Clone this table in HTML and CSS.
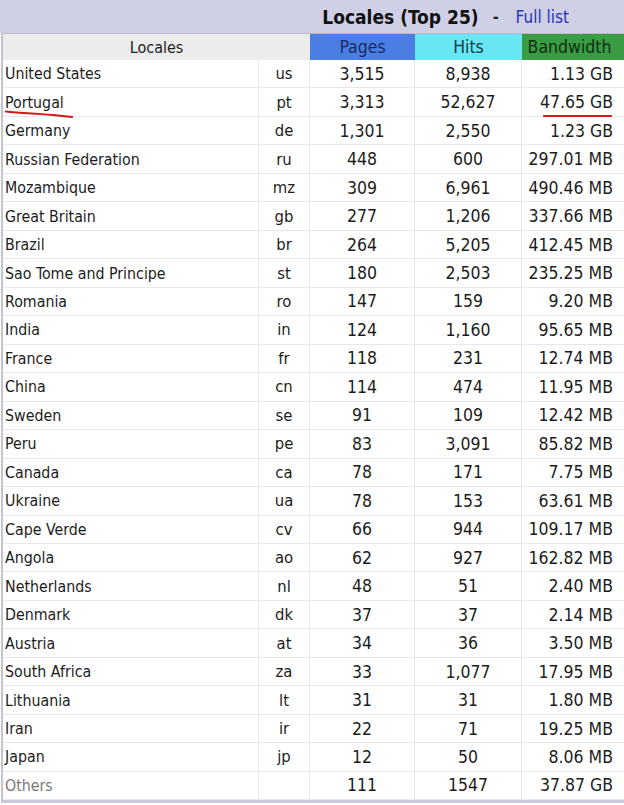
FILE: index.html
```html
<!DOCTYPE html>
<html>
<head>
<meta charset="utf-8">
<link rel="stylesheet" href="styles.css">
</head>
<body>
<div class="page">
  <div class="titlebar">
    <span class="title">Locales (Top 25)</span>
    <span class="dash">-</span>
    <a class="full">Full list</a>
  </div>
  <div class="table">
    <div class="hd hd-loc">Locales</div>
    <div class="hd hd-pages">Pages</div>
    <div class="hd hd-hits">Hits</div>
    <div class="hd hd-bw">Bandwidth</div>

    <div class="c name">United States</div><div class="c code">us</div><div class="c num">3,515</div><div class="c num">8,938</div><div class="c bw">1.13 GB</div>
    <div class="c name mark-wrap">Portugal<svg class="mark mark-left" width="72" height="10" viewBox="0 0 72 10"><path d="M1 2.5 C 20 4.5, 45 5, 67 8" stroke="#d41818" stroke-width="2.2" fill="none" stroke-linecap="round"/></svg></div><div class="c code">pt</div><div class="c num">3,313</div><div class="c num">52,627</div><div class="c bw mark-wrap">47.65 GB<svg class="mark mark-right" width="70" height="6" viewBox="0 0 70 6"><path d="M1 3 L 68 3" stroke="#d41818" stroke-width="2.2" fill="none" stroke-linecap="round"/></svg></div>
    <div class="c name">Germany</div><div class="c code">de</div><div class="c num">1,301</div><div class="c num">2,550</div><div class="c bw">1.23 GB</div>
    <div class="c name">Russian Federation</div><div class="c code">ru</div><div class="c num">448</div><div class="c num">600</div><div class="c bw">297.01 MB</div>
    <div class="c name">Mozambique</div><div class="c code">mz</div><div class="c num">309</div><div class="c num">6,961</div><div class="c bw">490.46 MB</div>
    <div class="c name">Great Britain</div><div class="c code">gb</div><div class="c num">277</div><div class="c num">1,206</div><div class="c bw">337.66 MB</div>
    <div class="c name">Brazil</div><div class="c code">br</div><div class="c num">264</div><div class="c num">5,205</div><div class="c bw">412.45 MB</div>
    <div class="c name">Sao Tome and Principe</div><div class="c code">st</div><div class="c num">180</div><div class="c num">2,503</div><div class="c bw">235.25 MB</div>
    <div class="c name">Romania</div><div class="c code">ro</div><div class="c num">147</div><div class="c num">159</div><div class="c bw">9.20 MB</div>
    <div class="c name">India</div><div class="c code">in</div><div class="c num">124</div><div class="c num">1,160</div><div class="c bw">95.65 MB</div>
    <div class="c name">France</div><div class="c code">fr</div><div class="c num">118</div><div class="c num">231</div><div class="c bw">12.74 MB</div>
    <div class="c name">China</div><div class="c code">cn</div><div class="c num">114</div><div class="c num">474</div><div class="c bw">11.95 MB</div>
    <div class="c name">Sweden</div><div class="c code">se</div><div class="c num">91</div><div class="c num">109</div><div class="c bw">12.42 MB</div>
    <div class="c name">Peru</div><div class="c code">pe</div><div class="c num">83</div><div class="c num">3,091</div><div class="c bw">85.82 MB</div>
    <div class="c name">Canada</div><div class="c code">ca</div><div class="c num">78</div><div class="c num">171</div><div class="c bw">7.75 MB</div>
    <div class="c name">Ukraine</div><div class="c code">ua</div><div class="c num">78</div><div class="c num">153</div><div class="c bw">63.61 MB</div>
    <div class="c name">Cape Verde</div><div class="c code">cv</div><div class="c num">66</div><div class="c num">944</div><div class="c bw">109.17 MB</div>
    <div class="c name">Angola</div><div class="c code">ao</div><div class="c num">62</div><div class="c num">927</div><div class="c bw">162.82 MB</div>
    <div class="c name">Netherlands</div><div class="c code">nl</div><div class="c num">48</div><div class="c num">51</div><div class="c bw">2.40 MB</div>
    <div class="c name">Denmark</div><div class="c code">dk</div><div class="c num">37</div><div class="c num">37</div><div class="c bw">2.14 MB</div>
    <div class="c name">Austria</div><div class="c code">at</div><div class="c num">34</div><div class="c num">36</div><div class="c bw">3.50 MB</div>
    <div class="c name">South Africa</div><div class="c code">za</div><div class="c num">33</div><div class="c num">1,077</div><div class="c bw">17.95 MB</div>
    <div class="c name">Lithuania</div><div class="c code">lt</div><div class="c num">31</div><div class="c num">31</div><div class="c bw">1.80 MB</div>
    <div class="c name">Iran</div><div class="c code">ir</div><div class="c num">22</div><div class="c num">71</div><div class="c bw">19.25 MB</div>
    <div class="c name">Japan</div><div class="c code">jp</div><div class="c num">12</div><div class="c num">50</div><div class="c bw">8.06 MB</div>
    <div class="c name others">Others</div><div class="c code"></div><div class="c num">111</div><div class="c num">1547</div><div class="c bw">37.87 GB</div>
  </div>
</div>
</body>
</html>
```

FILE: styles.css
```css
html, body {
  margin: 0;
  padding: 0;
  background: #ffffff;
}

.page {
  width: 624px;
  font-family: "DejaVu Sans Condensed", "DejaVu Sans", sans-serif;
  font-stretch: condensed;
  color: #1c1c1c;
}

.titlebar {
  height: 33px;
  background: #cfd0e6;
  display: flex;
  align-items: center;
  justify-content: flex-end;
  padding-right: 55px;
  box-sizing: border-box;
}

.title {
  font-weight: bold;
  font-size: 19px;
  color: #111111;
}

.dash {
  margin: 0 17px 0 14px;
  font-size: 16px;
  font-weight: bold;
  color: #222;
}

.full {
  font-size: 17px;
  color: #2636b8;
}

.table {
  display: grid;
  grid-template-columns: 256px 51px 105px 107px 103px;
  grid-template-rows: 27px;
  grid-auto-rows: 28.48px;
  border-left: 2px solid #c4c4cc;
  border-bottom: 3px solid #c9c9da;
  margin-left: 1px;
  font-size: 17.5px;
}

.hd {
  display: flex;
  align-items: center;
  justify-content: center;
  border-top: 1px solid #b8b8c8;
}

.hd-loc {
  grid-column: span 2;
  background: #ececec;
  color: #222;
  font-size: 16px;
}

.hd-pages {
  background: #4a7ee2;
  color: #1a2a64;
}

.hd-hits {
  background: #68e6f4;
  color: #173c4a;
}

.hd-bw {
  background: #3a9c42;
  color: #0f2e14;
  padding-right: 8px;
}

.c {
  display: flex;
  align-items: center;
  border-bottom: 1px solid #e8e8e8;
  border-right: 1px solid #e8e8e8;
  box-sizing: border-box;
  white-space: nowrap;
}

.name {
  padding-left: 2px;
  font-size: 15.8px;
}

.code {
  justify-content: center;
  font-size: 16.5px;
}

.num {
  justify-content: center;
}

.bw {
  justify-content: flex-end;
  padding-right: 12px;
  border-right: none;
}

.others {
  color: #7a7a7a;
}

.mark-wrap {
  position: relative;
}

.mark {
  position: absolute;
}

.mark-left {
  left: 2px;
  top: 21px;
}

.mark-right {
  right: 12px;
  top: 25px;
}
```
